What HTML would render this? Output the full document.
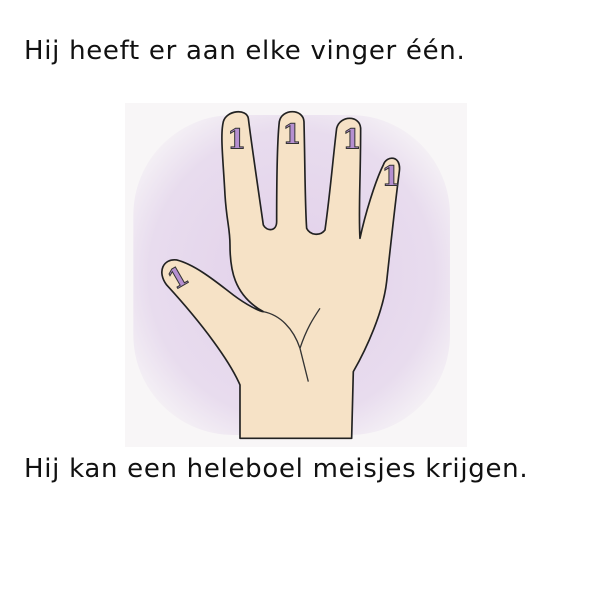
<!DOCTYPE html>
<html><head><meta charset="utf-8"><style>
html,body{margin:0;padding:0;background:#fff;width:591px;height:591px;overflow:hidden}
.t{position:absolute;left:24px;font-family:"DejaVu Sans","Liberation Sans",sans-serif;font-size:26px;letter-spacing:0.7px;color:#111;white-space:nowrap}
svg{position:absolute;left:0;top:0}
</style></head><body>
<div class="t" style="top:36px">Hij heeft er aan elke vinger één.</div>
<svg width="591" height="591">
<defs>
<radialGradient id="pg" cx="0.5" cy="0.5" r="0.6">
<stop offset="0" stop-color="#e2d0ea"/><stop offset="0.75" stop-color="#e8dcee"/><stop offset="1" stop-color="#f6f3f6"/>
</radialGradient>
</defs>
<rect x="125" y="103" width="342" height="344" fill="#f8f6f7"/>
<g transform="translate(120,95) scale(0.3333)">
<rect x="40" y="60" width="950" height="960" rx="300" fill="url(#pg)"/>
<path d="M360,1030 L360,870 C330,800 250,690 140,570 C110,530 130,490 170,495 C230,510 300,570 340,600 C380,630 420,650 430,650 C340,600 330,520 330,450 C330,400 320,380 315,300 C310,200 300,120 310,80 C320,45 380,40 385,70 C395,150 410,250 430,390 C440,410 470,410 470,380 C470,300 470,150 478,80 C485,40 550,40 552,80 C555,200 555,330 560,400 C570,420 600,425 615,405 C630,300 640,180 650,100 C660,60 720,60 722,100 C722,250 715,350 720,430 C735,360 765,260 790,210 C800,180 845,180 838,230 C825,330 812,450 800,560 C790,650 740,760 700,830 L695,1030 Z" fill="#f6e2c6" stroke="#222" stroke-width="5" stroke-linejoin="round"/>
<path d="M540,760 C520,700 480,660 430,650 M540,760 C560,700 580,670 600,640 M540,760 C550,800 560,840 565,860" fill="none" stroke="#333" stroke-width="4"/>
<g font-family="DejaVu Serif,serif" font-weight="bold" font-size="80" fill="#b58fd0" stroke="#333" stroke-width="3">
<text x="322" y="160">1</text><text x="488" y="145">1</text><text x="668" y="160">1</text><text x="785" y="272">1</text>
<text x="145" y="575" transform="rotate(-30 175 545)">1</text>
</g>
</g>
</svg>
<div class="t" style="top:454px">Hij kan een heleboel meisjes krijgen.</div>
</body></html>
